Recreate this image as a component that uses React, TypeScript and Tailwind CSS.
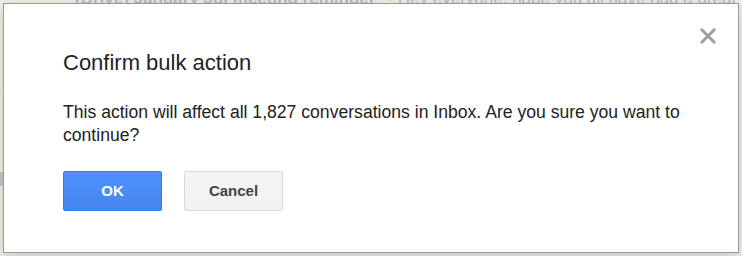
import React from 'react';

const CloseIcon: React.FC = () => (
  <svg width="16" height="16" viewBox="0 0 16 16" aria-hidden="true">
    <path d="M2 2 L14 14 M14 2 L2 14" stroke="#9e9e9e" strokeWidth="3" strokeLinecap="square" />
  </svg>
);

const App: React.FC = () => {
  return (
    <div
      className="relative w-full h-[256px] overflow-hidden bg-[#f2f2e7] pt-[3px] pl-[3px]"
      style={{ fontFamily: '"Liberation Sans", Arial, sans-serif' }}
    >
      {/* inbox page behind the modal */}
      <div className="absolute left-[75px] top-[-14px] whitespace-nowrap text-[17px] text-[#b9bdc9]">
        <span className="font-bold">[Drive] January Jul meeting reminder</span>
        <span className="ml-[12px]">- Hey everyone, hope you all have had a great week</span>
      </div>
      <div className="absolute left-[-9px] top-[80px] text-[17px] text-[#c8c8c8]">3</div>
      <div className="absolute left-0 top-[172px] w-[3px] h-[14px] bg-[#cacaca]"></div>

      {/* dialog */}
      <div className="relative z-10 w-[736px] h-[250px] flex flex-col bg-white border border-black/40 shadow-[0_4px_16px_rgba(0,0,0,0.2)] pl-[59px] pr-[40px] pt-[46px]">
        <button className="absolute right-[22px] top-[24px] p-0 leading-none">
          <CloseIcon />
        </button>
        <h2 className="text-[22px] leading-[26px] text-[#222] font-normal">Confirm bulk action</h2>
        <p className="mt-[25px] text-[17.6px] leading-[23px] text-[#222]">
          This action will affect all 1,827 conversations in Inbox. Are you sure you want to continue?
        </p>
        <div className="mt-[24px] flex gap-[22px]">
          <button className="w-[99px] h-[40px] rounded-[2px] border border-[#3079ed] bg-gradient-to-b from-[#4d90fe] to-[#4787ed] text-white text-[15px] font-bold">
            OK
          </button>
          <button className="w-[99px] h-[40px] rounded-[2px] border border-[#d8d8d8] bg-gradient-to-b from-[#f5f5f5] to-[#f1f1f1] text-[#444] text-[15px] font-bold">
            Cancel
          </button>
        </div>
      </div>
    </div>
  );
};

export default App;
